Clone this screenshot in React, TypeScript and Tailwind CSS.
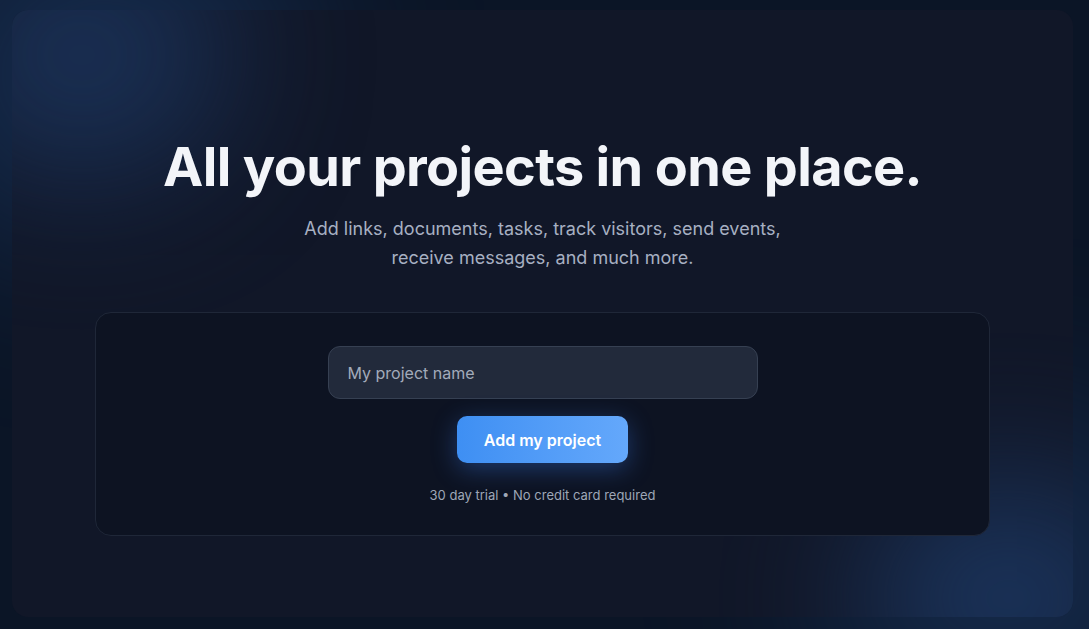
import React from "react";

export default function App() {
  return (
    <div
      className="relative h-[629px] w-full overflow-hidden bg-[#0b1526] pb-3 pl-3 pr-[16px] pt-[10px]"
      style={{ fontFamily: "Inter, 'Noto Sans', sans-serif" }}
    >
      {/* outer glows */}
      <div className="pointer-events-none absolute -left-24 -top-24 h-[340px] w-[400px] rounded-full bg-[#1d3a66] opacity-60 blur-[90px]" />
      <div className="pointer-events-none absolute -bottom-24 -right-24 h-[300px] w-[360px] rounded-full bg-[#1d3a66] opacity-60 blur-[90px]" />

      <main className="relative h-full overflow-hidden rounded-2xl bg-[#111728]">
        {/* inner glows */}
        <div className="pointer-events-none absolute -left-20 -top-20 h-[250px] w-[300px] rounded-full bg-[#1e3a66] opacity-70 blur-[70px]" />
        <div className="pointer-events-none absolute -bottom-24 -right-20 h-[230px] w-[290px] rounded-full bg-[#1e3d6c] opacity-75 blur-[70px]" />

        <div className="relative flex flex-col items-center pt-[125px]">
          <h1 className="text-[54px] font-bold leading-[64px] tracking-[-0.012em] text-[#f3f5f9]">
            All your projects in one place.
          </h1>
          <p className="mt-[15px] max-w-[500px] text-center text-[18px] leading-[29px] text-[#a7b0c2]">
            Add links, documents, tasks, track visitors, send events,
            <br />
            receive messages, and much more.
          </p>

          <section className="mt-[40px] flex w-[895px] flex-col items-center rounded-2xl border border-[#1f2738] bg-[#0d1322] pb-[29px] pt-[33px]">
            <input
              type="text"
              placeholder="My project name"
              className="h-[53px] w-[430px] rounded-xl border border-[#364052] bg-[#222a3b] px-[19px] text-[16px] text-[#e5e7eb] outline-none placeholder:text-[#a3abba]"
            />
            <button
              type="button"
              className="mt-[17px] h-[47px] w-[171px] rounded-[10px] bg-gradient-to-r from-[#3e8ff3] to-[#64a8fb] text-[16px] font-semibold text-white shadow-[0_6px_24px_rgba(59,130,246,0.35)]"
            >
              Add my project
            </button>
            <p className="mt-[23px] text-[13px] text-[#9ea7b7]">
              30 day trial • No credit card required
            </p>
          </section>
        </div>
      </main>
    </div>
  );
}
